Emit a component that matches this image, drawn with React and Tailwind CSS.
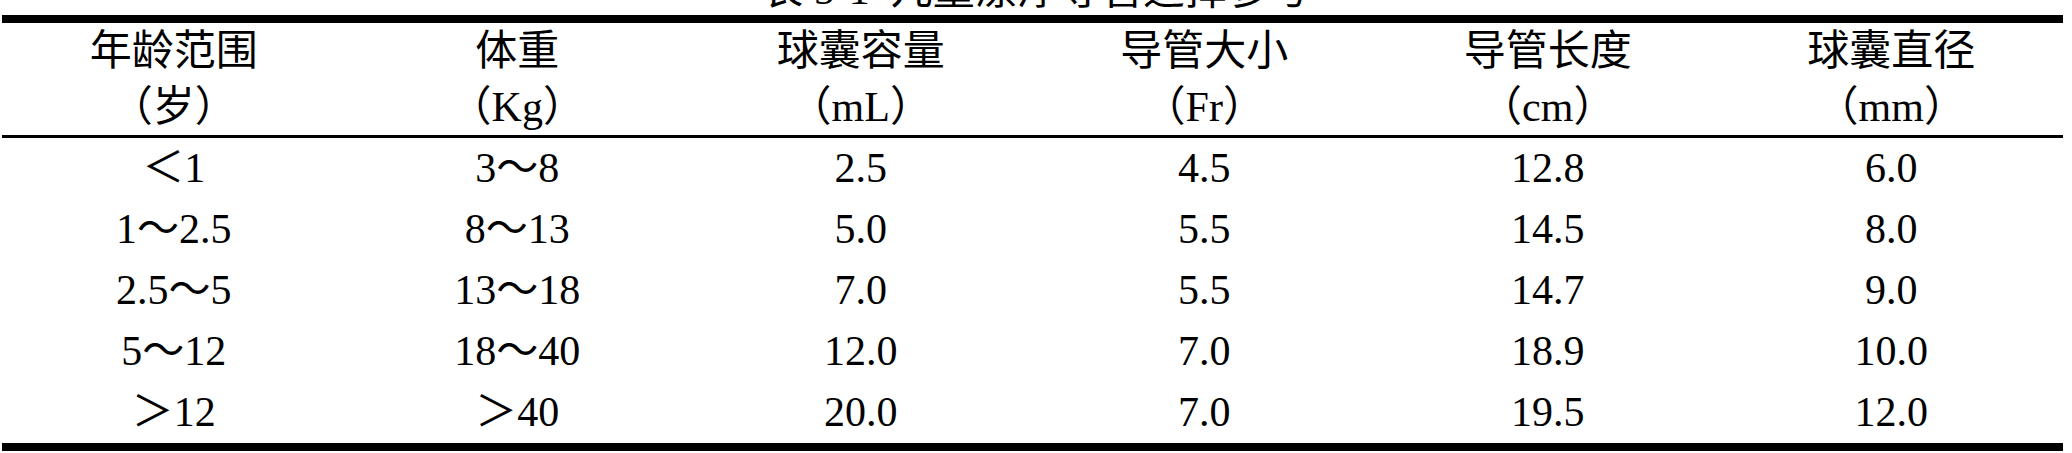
const headers = [
  ["年龄范围", "（岁）"],
  ["体重", "（Kg）"],
  ["球囊容量", "（mL）"],
  ["导管大小", "（Fr）"],
  ["导管长度", "（cm）"],
  ["球囊直径", "（mm）"],
];

const rows = [
  ["＜1", "3～8", "2.5", "4.5", "12.8", "6.0"],
  ["1～2.5", "8～13", "5.0", "5.5", "14.5", "8.0"],
  ["2.5～5", "13～18", "7.0", "5.5", "14.7", "9.0"],
  ["5～12", "18～40", "12.0", "7.0", "18.9", "10.0"],
  ["＞12", "＞40", "20.0", "7.0", "19.5", "12.0"],
];

export default function App() {
  return (
    <div
      className="h-[453px] w-[2072px] overflow-hidden bg-white text-[42px] text-black"
      style={{ fontFamily: '"Liberation Serif", "Noto Sans CJK SC", serif' }}
    >
      {/* caption, cut off by the top of the shot */}
      <div className="h-[15px] overflow-hidden">
        <div className="-mt-[31px] text-center leading-[42px]">
          表 5-1&nbsp;&nbsp;儿童漂浮导管选择参考
        </div>
      </div>

      <div className="ml-[2px] w-[2061px] border-y-[8px] border-black">
        <div className="grid grid-cols-6 border-b-[3px] border-black">
          {headers.map(([top, unit]) => (
            <div key={top} className="text-center leading-[56px]">
              <div>{top}</div>
              <div>{unit}</div>
            </div>
          ))}
        </div>

        {rows.map((row, i) => (
          <div key={i} className="grid h-[61px] grid-cols-6">
            {row.map((cell, j) => (
              <div key={j} className="text-center leading-[61px]">
                {cell}
              </div>
            ))}
          </div>
        ))}
      </div>
    </div>
  );
}
